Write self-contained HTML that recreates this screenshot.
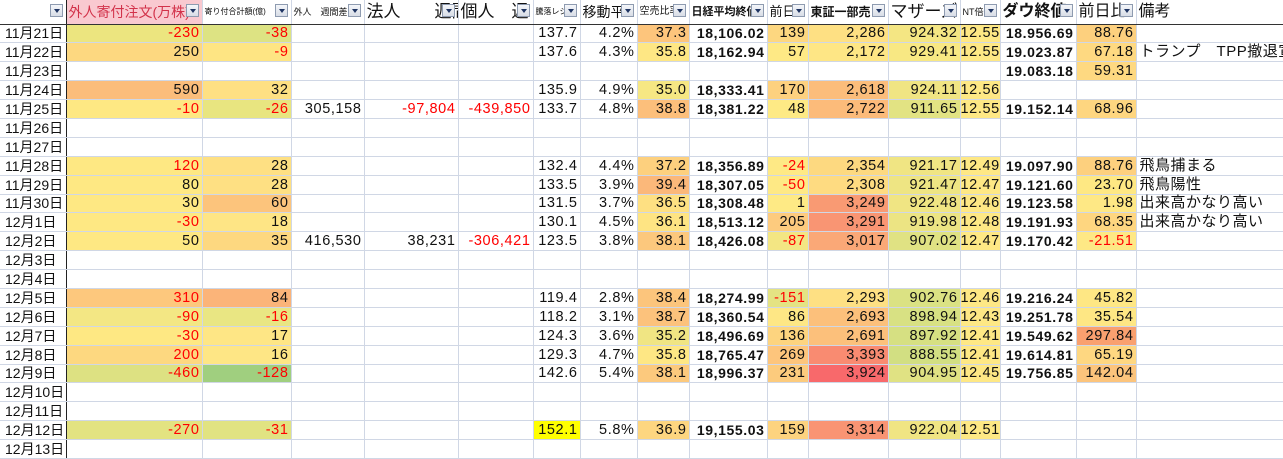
<!DOCTYPE html>
<html><head><meta charset="utf-8">
<style>
*{margin:0;padding:0;box-sizing:border-box}
body{width:1283px;height:447px;overflow:hidden;background:#fff;font-family:"Liberation Sans","Noto Sans CJK JP",sans-serif;}
table{border-collapse:collapse;table-layout:fixed;width:1283px;position:absolute;left:0;top:0}
tr{height:18.9px}
td{border-right:1px solid #d0d7e5;border-bottom:1px solid #d0d7e5;height:18.9px;font-size:14.5px;text-align:right;padding:0 2px 0 0;white-space:nowrap;overflow:hidden;color:#111;line-height:16px;letter-spacing:0.6px}
td.d{text-align:left;padding-left:5px;border-right:1px solid #222;font-size:14px;letter-spacing:0}
td.b{font-weight:bold;font-size:14px;letter-spacing:0.6px}
td.q{text-align:left;padding-left:3px;overflow:visible;font-size:15px;letter-spacing:0.5px}
.r{color:#f00}
tr.h{height:24px}
tr.h td{height:24px;border-bottom:1px solid #333;position:relative;text-align:left;padding-left:2px;letter-spacing:0;line-height:20px;overflow:hidden}
.dd{position:absolute;right:3px;top:4px;width:13px;height:13px;border:1px solid #8e9bb0;background:linear-gradient(#f4f6fa,#d8dde6)}
.dd:after{content:"";position:absolute;left:3px;top:4px;border-left:3px solid transparent;border-right:3px solid transparent;border-top:4px solid #1f3563}
</style></head><body>
<table>
<colgroup><col style="width:66px"><col style="width:136px"><col style="width:89px"><col style="width:73px"><col style="width:94px"><col style="width:75px"><col style="width:47px"><col style="width:57px"><col style="width:52px"><col style="width:78px"><col style="width:41px"><col style="width:80px"><col style="width:72px"><col style="width:40px"><col style="width:76px"><col style="width:60px"><col style="width:147px"></colgroup>
<tr class="h">
<td class="d" style="border-bottom:1px solid #333"><span class="dd"></span></td>
<td style="background:#f9c9d0;color:#d2324a;font-size:14px">外人寄付注文(万株)<span class="dd"></span></td>
<td style="font-size:8px">寄り付合計額(億)<span class="dd"></span></td>
<td style="font-size:9px">外人　週間差<span class="dd"></span></td>
<td style="font-size:17px">法人　　週間<span class="dd"></span></td>
<td style="font-size:17px">個人　週<span class="dd"></span></td>
<td style="font-size:8px">騰落レシオ<span class="dd"></span></td>
<td style="font-size:14px">移動平<span class="dd"></span></td>
<td style="font-size:10px">空売比率<span class="dd"></span></td>
<td style="font-size:11px;font-weight:bold">日経平均終値<span class="dd"></span></td>
<td style="font-size:13px">前日<span class="dd"></span></td>
<td style="font-size:12px;font-weight:bold">東証一部売<span class="dd"></span></td>
<td style="font-size:17px">マザーズ<span class="dd"></span></td>
<td style="font-size:9px">NT倍<span class="dd"></span></td>
<td style="font-size:16px;font-weight:bold">ダウ終値<span class="dd"></span></td>
<td style="font-size:16px">前日比<span class="dd"></span></td>
<td style="font-size:16px;overflow:visible">備考</td>
</tr>
<tr><td class="d">11月21日</td><td class="r" style="background:#ece57f">-230</td><td class="r" style="background:#dde383">-38</td><td></td><td></td><td></td><td>137.7</td><td>4.2%</td><td style="background:#fdc57c">37.3</td><td class="b">18,106.02</td><td style="background:#fdd780">139</td><td style="background:#fee083">2,286</td><td style="background:#f4e683">924.32</td><td style="background:#fee885">12.55</td><td class="b">18.956.69</td><td style="background:#fdd07e">88.76</td><td class="q"></td></tr>
<tr><td class="d">11月22日</td><td style="background:#fdd880">250</td><td class="r" style="background:#fee583">-9</td><td></td><td></td><td></td><td>137.6</td><td>4.3%</td><td style="background:#fee784">35.8</td><td class="b">18,162.94</td><td style="background:#fee985">57</td><td style="background:#fee685">2,172</td><td style="background:#f8e883">929.41</td><td style="background:#fee885">12.55</td><td class="b">19.023.87</td><td style="background:#fed981">67.18</td><td class="q">トランプ　TPP撤退宣</td></tr>
<tr><td class="d">11月23日</td><td></td><td></td><td></td><td></td><td></td><td></td><td></td><td></td><td></td><td></td><td></td><td></td><td></td><td class="b">19.083.18</td><td style="background:#fed981">59.31</td><td class="q"></td></tr>
<tr><td class="d">11月24日</td><td style="background:#fbbd7b">590</td><td style="background:#fee083">32</td><td></td><td></td><td></td><td>135.9</td><td>4.9%</td><td style="background:#f6e783">35.0</td><td class="b">18,333.41</td><td style="background:#fdd17f">170</td><td style="background:#fcbd7b">2,618</td><td style="background:#f0e583">924.11</td><td style="background:#fee885">12.56</td><td></td><td></td><td class="q"></td></tr>
<tr><td class="d">11月25日</td><td class="r" style="background:#fee883">-10</td><td class="r" style="background:#e8e580">-26</td><td>305,158</td><td class="r">-97,804</td><td class="r">-439,850</td><td>133.7</td><td>4.8%</td><td style="background:#fcbf7b">38.8</td><td class="b">18,381.22</td><td style="background:#feea85">48</td><td style="background:#fcbb7a">2,722</td><td style="background:#e2e383">911.65</td><td style="background:#fee885">12.55</td><td class="b">19.152.14</td><td style="background:#fed680">68.96</td><td class="q"></td></tr>
<tr><td class="d">11月26日</td><td></td><td></td><td></td><td></td><td></td><td></td><td></td><td></td><td></td><td></td><td></td><td></td><td></td><td></td><td></td><td class="q"></td></tr>
<tr><td class="d">11月27日</td><td></td><td></td><td></td><td></td><td></td><td></td><td></td><td></td><td></td><td></td><td></td><td></td><td></td><td></td><td></td><td class="q"></td></tr>
<tr><td class="d">11月28日</td><td class="r" style="background:#fee883">120</td><td style="background:#fee083">28</td><td></td><td></td><td></td><td>132.4</td><td>4.4%</td><td style="background:#fdd07e">37.2</td><td class="b">18,356.89</td><td class="r" style="background:#fee985">-24</td><td style="background:#fdd980">2,354</td><td style="background:#f0e583">921.17</td><td style="background:#fee885">12.49</td><td class="b">19.097.90</td><td style="background:#fdd07e">88.76</td><td class="q">飛鳥捕まる</td></tr>
<tr><td class="d">11月29日</td><td style="background:#fee883">80</td><td style="background:#fee083">28</td><td></td><td></td><td></td><td>133.5</td><td>3.9%</td><td style="background:#fbb87a">39.4</td><td class="b">18,307.05</td><td class="r" style="background:#fee985">-50</td><td style="background:#fedb81">2,308</td><td style="background:#eee583">921.47</td><td style="background:#fee885">12.47</td><td class="b">19.121.60</td><td style="background:#fee883">23.70</td><td class="q">飛鳥陽性</td></tr>
<tr><td class="d">11月30日</td><td style="background:#fee883">30</td><td style="background:#fcc47c">60</td><td></td><td></td><td></td><td>131.5</td><td>3.7%</td><td style="background:#fee082">36.5</td><td class="b">18,308.48</td><td style="background:#feea85">1</td><td style="background:#f99a73">3,249</td><td style="background:#f0e583">922.48</td><td style="background:#fee885">12.46</td><td class="b">19.123.58</td><td style="background:#fee885">1.98</td><td class="q">出来高かなり高い</td></tr>
<tr><td class="d">12月1日</td><td class="r" style="background:#fee883">-30</td><td style="background:#fee585">18</td><td></td><td></td><td></td><td>130.1</td><td>4.5%</td><td style="background:#fee483">36.1</td><td class="b">18,513.12</td><td style="background:#fdcb7e">205</td><td style="background:#f99573">3,291</td><td style="background:#ece483">919.98</td><td style="background:#fee885">12.48</td><td class="b">19.191.93</td><td style="background:#fed680">68.35</td><td class="q">出来高かなり高い</td></tr>
<tr><td class="d">12月2日</td><td style="background:#fee883">50</td><td style="background:#fdd880">35</td><td>416,530</td><td>38,231</td><td class="r">-306,421</td><td>123.5</td><td>3.8%</td><td style="background:#fcc87d">38.1</td><td class="b">18,426.08</td><td class="r" style="background:#f3e683">-87</td><td style="background:#faa877">3,017</td><td style="background:#e0e283">907.02</td><td style="background:#fee885">12.47</td><td class="b">19.170.42</td><td class="r" style="background:#fee885">-21.51</td><td class="q"></td></tr>
<tr><td class="d">12月3日</td><td></td><td></td><td></td><td></td><td></td><td></td><td></td><td></td><td></td><td></td><td></td><td></td><td></td><td></td><td></td><td class="q"></td></tr>
<tr><td class="d">12月4日</td><td></td><td></td><td></td><td></td><td></td><td></td><td></td><td></td><td></td><td></td><td></td><td></td><td></td><td></td><td></td><td class="q"></td></tr>
<tr><td class="d">12月5日</td><td class="r" style="background:#fdc87d">310</td><td style="background:#fbb479">84</td><td></td><td></td><td></td><td>119.4</td><td>2.8%</td><td style="background:#fcc57c">38.4</td><td class="b">18,274.99</td><td class="r" style="background:#e4e383">-151</td><td style="background:#fee083">2,293</td><td style="background:#dbe283">902.76</td><td style="background:#fee885">12.46</td><td class="b">19.216.24</td><td style="background:#fee784">45.82</td><td class="q"></td></tr>
<tr><td class="d">12月6日</td><td class="r" style="background:#f3e784">-90</td><td class="r" style="background:#e9e683">-16</td><td></td><td></td><td></td><td>118.2</td><td>3.1%</td><td style="background:#fcc27c">38.7</td><td class="b">18,360.54</td><td style="background:#fee785">86</td><td style="background:#fcc07b">2,693</td><td style="background:#d8e183">898.94</td><td style="background:#fee885">12.43</td><td class="b">19.251.78</td><td style="background:#fee784">35.54</td><td class="q"></td></tr>
<tr><td class="d">12月7日</td><td class="r" style="background:#fee883">-30</td><td style="background:#fee685">17</td><td></td><td></td><td></td><td>124.3</td><td>3.6%</td><td style="background:#f0e583">35.2</td><td class="b">18,496.69</td><td style="background:#fdd47f">136</td><td style="background:#fcc07b">2,691</td><td style="background:#d6e082">897.92</td><td style="background:#fee885">12.41</td><td class="b">19.549.62</td><td style="background:#f9a06f">297.84</td><td class="q"></td></tr>
<tr><td class="d">12月8日</td><td class="r" style="background:#fdd880">200</td><td style="background:#fee685">16</td><td></td><td></td><td></td><td>129.3</td><td>4.7%</td><td style="background:#fee784">35.8</td><td class="b">18,765.47</td><td style="background:#fdc57c">269</td><td style="background:#f98b71">3,393</td><td style="background:#d2df82">888.55</td><td style="background:#fee885">12.41</td><td class="b">19.614.81</td><td style="background:#fed781">65.19</td><td class="q"></td></tr>
<tr><td class="d">12月9日</td><td class="r" style="background:#dde182">-460</td><td class="r" style="background:#a0cf7f">-128</td><td></td><td></td><td></td><td>142.6</td><td>5.4%</td><td style="background:#fcc97d">38.1</td><td class="b">18,996.37</td><td style="background:#fccb7d">231</td><td style="background:#f8696b">3,924</td><td style="background:#e0e283">904.95</td><td style="background:#fee885">12.45</td><td class="b">19.756.85</td><td style="background:#fcc47c">142.04</td><td class="q"></td></tr>
<tr><td class="d">12月10日</td><td></td><td></td><td></td><td></td><td></td><td></td><td></td><td></td><td></td><td></td><td></td><td></td><td></td><td></td><td></td><td class="q"></td></tr>
<tr><td class="d">12月11日</td><td></td><td></td><td></td><td></td><td></td><td></td><td></td><td></td><td></td><td></td><td></td><td></td><td></td><td></td><td></td><td class="q"></td></tr>
<tr><td class="d">12月12日</td><td class="r" style="background:#e3e381">-270</td><td class="r" style="background:#e1e382">-31</td><td></td><td></td><td></td><td style="background:#ffff00">152.1</td><td>5.8%</td><td style="background:#fdd680">36.9</td><td class="b">19,155.03</td><td style="background:#fdd37f">159</td><td style="background:#f99473">3,314</td><td style="background:#f0e583">922.04</td><td style="background:#fee885">12.51</td><td></td><td></td><td class="q"></td></tr>
<tr><td class="d">12月13日</td><td></td><td></td><td></td><td></td><td></td><td></td><td></td><td></td><td></td><td></td><td></td><td></td><td></td><td></td><td></td><td class="q"></td></tr>
</table>
</body></html>
